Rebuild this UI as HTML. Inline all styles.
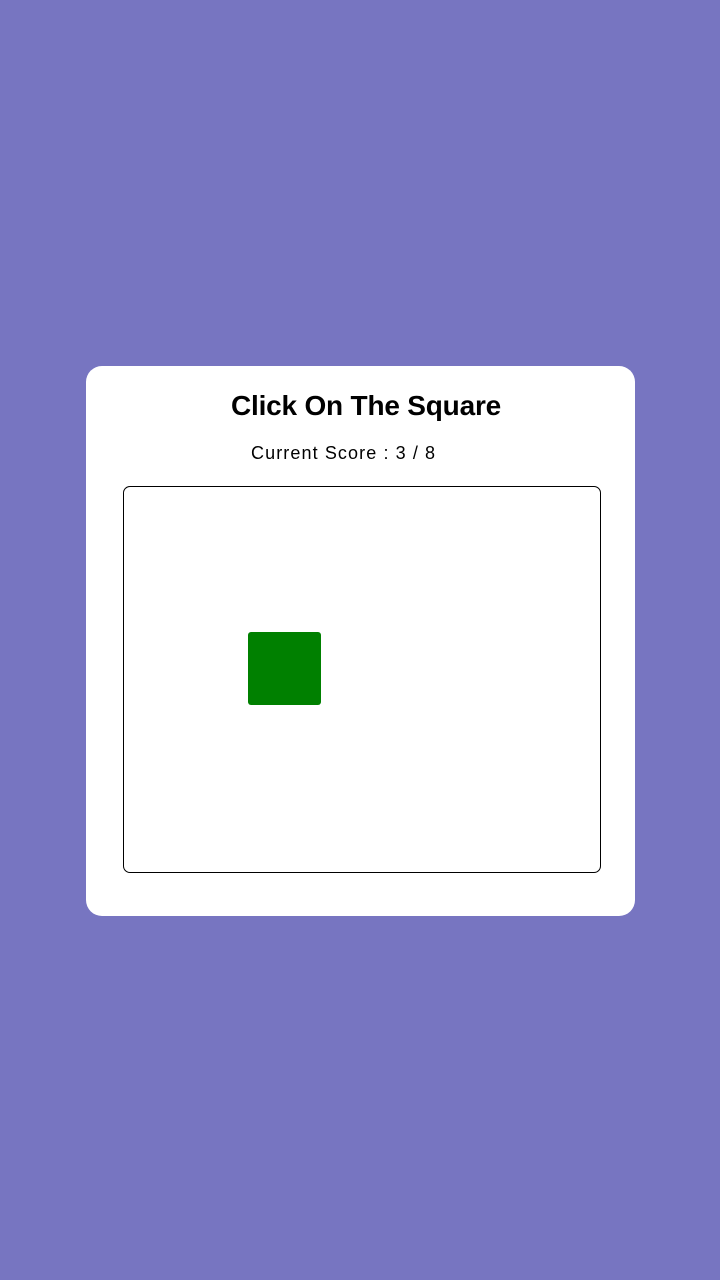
<!DOCTYPE html>
<html><head><meta charset="utf-8"><style>
html,body{margin:0;padding:0;width:720px;height:1280px;background:#7775c1;overflow:hidden;font-family:"Liberation Sans",sans-serif;}
.card{position:absolute;left:86px;top:366px;width:549px;height:550px;background:#fff;border-radius:16px;}
h1{position:absolute;left:0;top:388px;width:732px;text-align:center;margin:0;font-size:28px;font-weight:bold;line-height:36px;color:#000;letter-spacing:-0.2px;}
.score{position:absolute;left:251px;top:441px;font-size:18px;line-height:24px;color:#000;letter-spacing:1.1px;}
.box{position:absolute;left:123px;top:486px;width:476px;height:385px;border:1.5px solid #000;border-radius:7px;}
.sq{position:absolute;left:248px;top:632px;width:73px;height:73px;background:#008000;border-radius:3px;}
</style></head><body>
<div class="card"></div>
<h1>Click On The Square</h1>
<div class="score">Current Score : 3 / 8</div>
<div class="box"></div>
<div class="sq"></div>
</body></html>
